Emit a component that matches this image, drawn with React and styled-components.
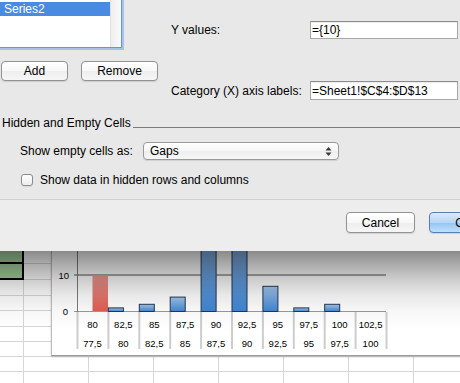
import React from 'react'
import styled, { createGlobalStyle } from 'styled-components'

const GlobalStyle = createGlobalStyle`
  html, body { margin: 0; padding: 0; background: #fff; }
  body { font-family: "Liberation Sans", Arial, sans-serif; font-size: 12px; color: #000; }
`

const series = ['Series1', 'Series2']
const upper = ['80', '82,5', '85', '87,5', '90', '92,5', '95', '97,5', '100', '102,5']
const lower = ['77,5', '80', '82,5', '85', '87,5', '90', '92,5', '95', '97,5', '100']
// value of the blue series in each category (null = no bar)
const blue = [null, 1, 2, 4, 25, 25, 7, 1, 2, null]

const App = () => {
    const rows = [13, 16, 16, 15, 16, 15, 15, 15, 15]
    const cells = []
    rows.forEach((h, r) => {
        for (let c = 0; c < 8; c++) cells.push({ r, c, sel: c === 0 && r < 2 })
    })

    return (
        <Screen>
            <GlobalStyle />
            <Panel>
                <Upper>
                    <LeftCol>
                        <ListBox>
                            <List>
                                {series.map((s) => (
                                    <ListItem key={s} $selected={s === 'Series2'}>{s}</ListItem>
                                ))}
                            </List>
                            <Scroller />
                        </ListBox>
                        <ButtonRow>
                            <PushButton $w={67}>Add</PushButton>
                            <PushButton $w={77}>Remove</PushButton>
                        </ButtonRow>
                    </LeftCol>
                    <RightCol>
                        <FieldRow $top={21}>
                            <span>Y values:</span>
                            <Field $h={18} readOnly value="={10}" />
                        </FieldRow>
                        <FieldRow $top={42}>
                            <span>Category (X) axis labels:</span>
                            <Field $h={19} readOnly value="=Sheet1!$C$4:$D$13" />
                        </FieldRow>
                    </RightCol>
                </Upper>
                <GroupHead>
                    <span>Hidden and Empty Cells</span>
                    <GroupLine />
                </GroupHead>
                <OptionRow>
                    <span>Show empty cells as:</span>
                    <Select>
                        <span>Gaps</span>
                        <svg width="7" height="11" viewBox="0 0 7 11">
                            <path d="M3.5 1 L6.5 4.5 L0.5 4.5 Z" fill="#3a3a3a" />
                            <path d="M3.5 10 L6.5 6.5 L0.5 6.5 Z" fill="#3a3a3a" />
                        </svg>
                    </Select>
                </OptionRow>
                <CheckRow>
                    <CheckBox />
                    <span>Show data in hidden rows and columns</span>
                </CheckRow>
            </Panel>
            <Footer>
                <PushButton $w={69} $h={21}>Cancel</PushButton>
                <PushButton $w={70} $h={21} $primary>OK</PushButton>
            </Footer>
            <SheetArea>
                <Cells>
                    {cells.map((cell) => (
                        <Cell key={cell.r + '-' + cell.c} $sel={cell.sel} />
                    ))}
                </Cells>
                <Chart>
                    <svg width="430" height="104" viewBox="0 0 430 104">
                        <defs>
                            <linearGradient id="blueFill" x1="0" y1="0" x2="0" y2="1">
                                <stop offset="0" stopColor="#a6c8f0" />
                                <stop offset="1" stopColor="#3f86d4" />
                            </linearGradient>
                            <linearGradient id="redFill" x1="0" y1="0" x2="0" y2="1">
                                <stop offset="0" stopColor="#ef938c" />
                                <stop offset="1" stopColor="#dc5144" />
                            </linearGradient>
                        </defs>
                        <line x1="22" y1="24" x2="334" y2="24" stroke="#8a8a8a" strokeWidth="1.5" />
                        <line x1="22" y1="60.5" x2="334" y2="60.5" stroke="#9a9a9a" strokeWidth="1" />
                        <line x1="25.5" y1="0" x2="25.5" y2="61" stroke="#7c7c7c" strokeWidth="1" />
                        <text x="17" y="28" textAnchor="end" fontSize="9.5" fontFamily="Liberation Sans, Arial, sans-serif">10</text>
                        <text x="16" y="64" textAnchor="end" fontSize="9.5" fontFamily="Liberation Sans, Arial, sans-serif">0</text>
                        <rect x="40.5" y="24" width="15.5" height="36" fill="url(#redFill)" opacity="0.92" />
                        {blue.map((v, i) => {
                            if (v === null) return null
                            const x = 25 + 30.9 * i
                            const h = v * 3.6
                            return (
                                <rect key={i} x={x + 0.5} y={60 - h + 0.5} width="15" height={h}
                                    fill="url(#blueFill)" stroke="#24364f" strokeWidth="1" />
                            )
                        })}
                        {Array.from({ length: 11 }).map((_, i) => (
                            <line key={i} x1={25.5 + 30.9 * i} y1="61" x2={25.5 + 30.9 * i} y2="98"
                                stroke="#cdcdcd" strokeWidth="2" />
                        ))}
                        {upper.map((t, i) => (
                            <text key={'u' + i} x={25 + 30.9 * (i + 0.5)} y="76.7" textAnchor="middle"
                                fontSize="9.5" fontFamily="Liberation Sans, Arial, sans-serif">{t}</text>
                        ))}
                        {lower.map((t, i) => (
                            <text key={'l' + i} x={25 + 30.9 * (i + 0.5)} y="96.3" textAnchor="middle"
                                fontSize="9.5" fontFamily="Liberation Sans, Arial, sans-serif">{t}</text>
                        ))}
                    </svg>
                </Chart>
                <Shade />
            </SheetArea>
        </Screen>
    )
}

const Screen = styled.div`
    width: 460px; height: 383px; overflow: hidden; display: flex; flex-direction: column;
`
const Panel = styled.div`
    height: 200px; flex-shrink: 0; box-sizing: border-box; background: #e8e8e8; border-bottom: 1px solid #cfcfcf;
`
const Upper = styled.div`
    display: flex; height: 100px;
`
const LeftCol = styled.div`
    width: 171px; flex-shrink: 0; display: flex; flex-direction: column;
`
const ListBox = styled.div`
    margin: -4px 0 0 -4px; width: 126px; height: 52px; box-sizing: border-box; display: flex; overflow: hidden;
    background: #fff; border: 1px solid #6f94c6; box-shadow: 0 0 0 2px #a3c3ec;
`
const List = styled.div`
    flex: 1; margin-top: -9px;
`
const ListItem = styled.div`
    height: 14px; line-height: 14px; padding-left: 7px;
    background: ${(p) => (p.$selected ? '#4a8ae0' : 'transparent')};
    color: ${(p) => (p.$selected ? '#fff' : '#000')};
`
const Scroller = styled.div`
    width: 10px; border-left: 1px solid #e2e2e2; background: linear-gradient(90deg, #eeeeee, #fafafa);
`
const ButtonRow = styled.div`
    display: flex; gap: 13px; margin-top: 13px; padding-left: 1px;
`
const PushButton = styled.button`
    width: ${(p) => p.$w}px; height: ${(p) => p.$h || 20}px; box-sizing: border-box; padding: 0; margin: 0;
    font-family: "Liberation Sans", Arial, sans-serif; font-size: 12px; color: #000;
    border: 1px solid ${(p) => (p.$primary ? '#5b7db1' : '#929292')}; border-radius: 4px;
    background: ${(p) => (p.$primary
        ? 'linear-gradient(#dbeafb, #b6d6f7 50%, #93c4f3 51%, #bfe0fb)'
        : 'linear-gradient(#ffffff, #f7f7f7 50%, #eeeeee 51%, #f6f6f6)')};
    box-shadow: 0 1px 1px rgba(0, 0, 0, 0.12);
`
const RightCol = styled.div`
    flex: 1; display: flex; flex-direction: column;
`
const FieldRow = styled.div`
    display: grid; grid-template-columns: 139px 148px; align-items: center; margin-top: ${(p) => p.$top}px;
`
const Field = styled.input`
    height: ${(p) => p.$h}px; width: 148px; box-sizing: border-box; margin: 0; padding: 0 0 0 1px;
    font-family: "Liberation Sans", Arial, sans-serif; font-size: 12px; color: #000;
    background: #fff; border: 1px solid #a8a8a8; border-top-color: #8c8c8c; outline: none;
    box-shadow: inset 0 1px 1px rgba(0, 0, 0, 0.08);
`
const GroupHead = styled.div`
    display: flex; align-items: flex-end; height: 14px; line-height: 14px; margin-top: 16px; padding-left: 2px;
`
const GroupLine = styled.div`
    flex: 1; height: 1px; background: #7c7c7c; margin: 0 0 2px 2px;
`
const OptionRow = styled.div`
    display: grid; grid-template-columns: 123px 196px; align-items: center; margin-top: 12px; padding-left: 20px;
`
const Select = styled.div`
    height: 18px; box-sizing: border-box; display: flex; align-items: center; justify-content: space-between;
    padding: 0 6px 0 6px; border: 1px solid #9a9a9a; border-radius: 4px;
    background: linear-gradient(#ffffff, #f6f6f6 50%, #eeeeee 51%, #f7f7f7);
    box-shadow: 0 1px 1px rgba(0, 0, 0, 0.1);
    svg { display: block; }
`
const CheckRow = styled.div`
    display: flex; align-items: center; gap: 7px; margin-top: 13px; padding-left: 21px;
`
const CheckBox = styled.div`
    width: 12px; height: 12px; box-sizing: border-box; border: 1px solid #8c8c8c; border-radius: 3px;
    background: linear-gradient(#ffffff, #ececec); box-shadow: 0 1px 1px rgba(0, 0, 0, 0.08);
`
const Footer = styled.div`
    height: 51px; flex-shrink: 0; box-sizing: border-box; background: #ededed;
    display: flex; justify-content: flex-end; align-items: flex-start; gap: 14px;
    padding: 12px 12px 0 0; margin-right: -51px;
`
const SheetArea = styled.div`
    flex: 1; position: relative; overflow: hidden; background: #fff;
`
const Cells = styled.div`
    display: grid; grid-template-columns: 24px repeat(7, 65px); grid-template-rows: 13px 16px 16px 15px 16px 15px 15px 15px 15px;
`
const Cell = styled.div`
    box-sizing: border-box;
    border-right: ${(p) => (p.$sel ? '2px solid #000' : '1px solid #d6d6d6')};
    border-bottom: ${(p) => (p.$sel ? '2px solid #000' : '1px solid #d6d6d6')};
    background: ${(p) => (p.$sel ? '#a8d29f' : 'transparent')};
`
const Chart = styled.div`
    position: absolute; left: 51px; top: 0; width: 440px; height: 105px; box-sizing: border-box;
    background: #fff; border-left: 1px solid #bdbdbd; border-bottom: 1px solid #9c9c9c;
    box-shadow: 0 1px 2px rgba(0, 0, 0, 0.2);
    svg { display: block; }
`
const Shade = styled.div`
    position: absolute; top: 0; left: 0; right: 0; height: 80px; pointer-events: none;
    background: linear-gradient(rgba(0, 0, 0, 0.46), rgba(0, 0, 0, 0.34) 12px, rgba(0, 0, 0, 0.2) 28px,
        rgba(0, 0, 0, 0.09) 44px, rgba(0, 0, 0, 0.03) 60px, rgba(0, 0, 0, 0) 80px);
`

export default App
